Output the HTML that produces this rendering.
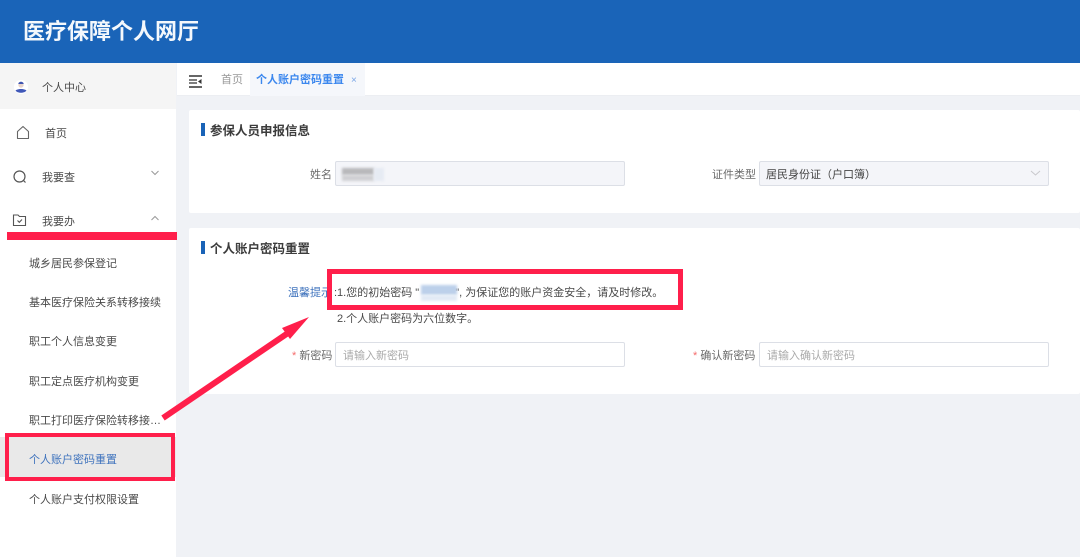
<!DOCTYPE html>
<html lang="zh">
<head>
<meta charset="utf-8">
<style>
html,body{margin:0;padding:0}
body{width:1080px;height:557px;overflow:hidden;background:#f0f2f6;position:relative;font-family:"Liberation Sans","Noto Sans CJK SC",sans-serif;color:#4a4a4a}
#w{left:0;top:0;width:1080px;height:557px;filter:blur(.35px)}
div,span{position:absolute;box-sizing:border-box}
.t{white-space:nowrap;line-height:16px;height:16px;font-size:11px}
.input{border:1px solid #dcdfe6;border-radius:2px;background:#fff;height:25px;font-size:11px;line-height:26px;padding-left:7px;color:#aaa;white-space:nowrap}
.dis{background:#f4f5f9;color:#444}
.red{background:#ff1f4b}
.mark{width:4px;height:13px;background:#1a63b7}
.h{font-size:12.5px;font-weight:700;color:#3c3c3c;white-space:nowrap;line-height:16px;height:16px}
svg{position:absolute;overflow:visible}
</style>
</head>
<body>
<div id="w">
<div style="left:0;top:0;width:1080px;height:63px;background:#1a64b8"></div>
<div style="left:23px;top:16px;font-size:22px;line-height:31px;font-weight:700;color:#f4f8fc;white-space:nowrap">医疗保障个人网厅</div>

<div style="left:0;top:63px;width:176px;height:494px;background:#fff"></div>
<div style="left:0;top:63px;width:176px;height:46px;background:#f5f5f5"></div>

<svg style="left:14px;top:80px" width="14" height="14" viewBox="0 0 14 14"><circle cx="7" cy="7" r="7" fill="#fff"/><circle cx="7" cy="5" r="2.700" fill="#e8d4cc"/><path d="M4.300 4C4.500 1 9.500 1 9.700 4Z" fill="#3f55b0"/><path d="M1.500 10.500C3 9.300 5 9.300 5.500 9H8.500C9 9.300 11 9.300 12.500 10.500C10.500 13.500 3.500 13.500 1.500 10.500Z" fill="#4058b8"/></svg>
<div class="t" style="left:42px;top:80px">个人中心</div>

<svg style="left:16px;top:125px" width="14" height="15" viewBox="0 0 14 15" fill="none" stroke="#666" stroke-width="1.100"><path d="M1.500 13.500V6.500L7 1.500L12.500 6.500V13.500Z" stroke-linejoin="round"/></svg>
<div class="t" style="left:45px;top:126px">首页</div>

<svg style="left:12px;top:169px" width="16" height="16" viewBox="0 0 16 16" fill="none" stroke="#555" stroke-width="1.200"><circle cx="7.500" cy="7.500" r="5.500"/><path d="M11.500 11.500L13.500 13.500"/></svg>
<div class="t" style="left:42px;top:170px">我要查</div>
<svg style="left:150px;top:170px" width="10" height="6" viewBox="0 0 10 6" fill="none" stroke="#999" stroke-width="1"><path d="M1.500 1L5 4.500L8.500 1"/></svg>

<svg style="left:12px;top:213px" width="15" height="14" viewBox="0 0 15 14" fill="none" stroke="#555" stroke-width="1.100"><path d="M1.500 12.500V2H6L7.500 3.500H13.500V12.500Z"/><path d="M5.500 7.500L7.300 9.300L10 6.500"/></svg>
<div class="t" style="left:42px;top:214px">我要办</div>
<svg style="left:150px;top:215px" width="10" height="6" viewBox="0 0 10 6" fill="none" stroke="#999" stroke-width="1"><path d="M1.500 5L5 1.500L8.500 5"/></svg>
<div class="red" style="left:7px;top:232px;width:170px;height:8px"></div>

<div class="t" style="left:29px;top:256px">城乡居民参保登记</div>
<div class="t" style="left:29px;top:295px">基本医疗保险关系转移接续</div>
<div class="t" style="left:29px;top:334px">职工个人信息变更</div>
<div class="t" style="left:29px;top:374px">职工定点医疗机构变更</div>
<div class="t" style="left:29px;top:413px">职工打印医疗保险转移接…</div>

<div style="left:0;top:437px;width:176px;height:40px;background:#e9e9e9"></div>
<div style="left:5px;top:433px;width:170px;height:48px;border:4px solid #ff1f4b"></div>
<div class="t" style="left:29px;top:452px;color:#3f73bd">个人账户密码重置</div>
<div class="t" style="left:29px;top:492px">个人账户支付权限设置</div>

<div style="left:177px;top:63px;width:903px;height:33px;background:#fff;border-bottom:1px solid #eceef2"></div>
<svg style="left:189px;top:75px" width="13" height="13" viewBox="0 0 13 13" fill="none" stroke="#333" stroke-width="1.500"><path d="M0 1H13M0 12H13"/><path d="M0 5H8M0 8H8" stroke-width="1.300"/><path d="M12.500 4L9 6.500L12.500 9Z" fill="#333" stroke="none"/></svg>
<div class="t" style="left:221px;top:72px;color:#999">首页</div>
<div style="left:250px;top:63px;width:115px;height:33px;background:#f5f7fb"></div>
<div class="t" style="left:256px;top:72px;color:#3b87ee;font-weight:700;-webkit-text-stroke:0">个人账户密码重置</div>
<div class="t" style="left:351px;top:73px;color:#7aa6e6;font-size:10px">×</div>

<div style="left:189px;top:110px;width:891px;height:103px;background:#fff;border-radius:2px"></div>
<div class="mark" style="left:201px;top:123px"></div>
<div class="h" style="left:210px;top:123px">参保人员申报信息</div>
<div class="t" style="left:310px;top:167px;color:#6a6a6a">姓名</div>
<div class="input dis" style="left:335px;top:161px;width:290px"></div>
<div style="left:342px;top:168px;width:32px;height:7px;background:#b8b8bb;filter:blur(1.200px)"></div>
<div style="left:342px;top:175px;width:32px;height:6px;background:#d0d0d3;filter:blur(1.200px)"></div>
<div style="left:374px;top:168px;width:10px;height:13px;background:#e6ebf3;filter:blur(1.200px)"></div>
<div class="t" style="left:712px;top:167px;color:#6a6a6a">证件类型</div>
<div class="input dis" style="left:759px;top:161px;width:290px;padding-left:6px">居民身份证（户口簿）</div>
<svg style="left:1030px;top:170px" width="11" height="6" viewBox="0 0 11 6" fill="none" stroke="#c8c8cc" stroke-width="1"><path d="M1 1L5.500 5L10 1"/></svg>

<div style="left:189px;top:228px;width:891px;height:166px;background:#fff;border-radius:2px"></div>
<div class="mark" style="left:201px;top:241px"></div>
<div class="h" style="left:210px;top:241px">个人账户密码重置</div>

<div class="t" style="left:288px;top:285px;color:#3f73bd">温馨提示</div>
<div class="t" style="left:334px;top:285px">:1.您的初始密码 "<span style="position:static;display:inline-block;width:36px"></span>", 为保证您的账户资金安全，请及时修改。</div>
<div style="left:421px;top:285px;width:36px;height:10px;background:#bcd0ea;filter:blur(1.200px)"></div>
<div style="left:421px;top:295px;width:36px;height:6px;background:#e2eaf5;filter:blur(1.200px)"></div>
<div class="t" style="left:337px;top:311px">2.个人账户密码为六位数字。</div>

<div style="left:327px;top:269px;width:356px;height:41px;border:5px solid #ff1f4b"></div>

<div class="t" style="left:292px;top:348px;color:#6a6a6a"><span style="position:static;color:#f56c6c">*</span> 新密码</div>
<div class="input" style="left:335px;top:342px;width:290px">请输入新密码</div>
<div class="t" style="left:693px;top:348px;color:#6a6a6a"><span style="position:static;color:#f56c6c">*</span> 确认新密码</div>
<div class="input" style="left:759px;top:342px;width:290px">请输入确认新密码</div>

<svg style="left:0;top:0" width="1080" height="557" viewBox="0 0 1080 557"><path d="M163 418L288 333" stroke="#ff1f4b" stroke-width="6" fill="none"/><path d="M309 317L282 328L290 339Z" fill="#ff1f4b"/></svg>
</div>
</body>
</html>
